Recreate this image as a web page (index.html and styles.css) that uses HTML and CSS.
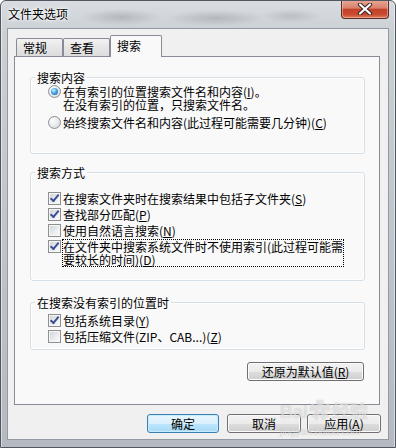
FILE: index.html
```html
<!DOCTYPE html>
<html lang="zh-CN">
<head>
    <meta charset="UTF-8">
    <title>文件夹选项</title>
    <link rel="stylesheet" href="styles.css">
</head>
<body>
    <div class="window">
        <div class="titlebar">
            <span class="title">文件夹选项</span>
            <button class="close" aria-label="关闭">
                <svg width="16" height="12" viewBox="0 0 16 12">
                    <path d="M3 1.5 L13 10.5 M13 1.5 L3 10.5" stroke="#3a2520" stroke-width="4.2" stroke-linecap="round"/>
                    <path d="M3 1.5 L13 10.5 M13 1.5 L3 10.5" stroke="#fff" stroke-width="2.2" stroke-linecap="round"/>
                </svg>
            </button>
        </div>

        <div class="client">
            <div class="tabs">
                <div class="tab">常规</div>
                <div class="tab">查看</div>
                <div class="tab active">搜索</div>
            </div>

            <div class="pane">
                <fieldset class="group g1">
                    <legend>搜索内容</legend>
                    <label class="opt">
                        <span class="radio on"></span>
                        <span class="txt">在有索引的位置搜索文件名和内容(<u>I</u>)。<br>在没有索引的位置，只搜索文件名。</span>
                    </label>
                    <label class="opt second">
                        <span class="radio"></span>
                        <span class="txt">始终搜索文件名和内容(此过程可能需要几分钟)(<u>C</u>)</span>
                    </label>
                </fieldset>

                <fieldset class="group g2">
                    <legend>搜索方式</legend>
                    <label class="opt">
                        <span class="cb on"></span>
                        <span class="txt">在搜索文件夹时在搜索结果中包括子文件夹(<u>S</u>)</span>
                    </label>
                    <label class="opt">
                        <span class="cb on"></span>
                        <span class="txt">查找部分匹配(<u>P</u>)</span>
                    </label>
                    <label class="opt">
                        <span class="cb"></span>
                        <span class="txt">使用自然语言搜索(<u>N</u>)</span>
                    </label>
                    <label class="opt">
                        <span class="cb on"></span>
                        <span class="txt focus">在文件夹中搜索系统文件时不使用索引(此过程可能需<br>要较长的时间)(<u>D</u>)</span>
                    </label>
                </fieldset>

                <fieldset class="group g3">
                    <legend>在搜索没有索引的位置时</legend>
                    <label class="opt">
                        <span class="cb on"></span>
                        <span class="txt">包括系统目录(<u>Y</u>)</span>
                    </label>
                    <label class="opt">
                        <span class="cb"></span>
                        <span class="txt">包括压缩文件(ZIP、CAB...)(<u>Z</u>)</span>
                    </label>
                </fieldset>

                <div class="reset-row">
                    <button class="btn reset">还原为默认值(<u>R</u>)</button>
                </div>
            </div>

            <div class="actions">
                <button class="btn default ok">确定</button>
                <button class="btn cancel">取消</button>
                <button class="btn apply">应用(<u>A</u>)</button>
            </div>
        </div>

        <div class="watermark">
            <div class="wm-logo">Bai<span class="paw">&#10047;</span>经验</div>
            <div class="wm-url">jingyan.baidu.com</div>
        </div>
    </div>
</body>
</html>
```

FILE: styles.css
```css
body {
    margin: 0;
    background: #fff;
    font-family: "Noto Sans CJK SC", "Noto Sans", sans-serif;
    font-size: 12px;
    color: #000;
}
.window {
    position: relative;
    width: 396px;
    height: 448px;
    box-sizing: border-box;
    border: 1px solid #50575e;
    border-radius: 6px 6px 0 0;
    padding: 0 6px 7px 6px;
    display: flex;
    flex-direction: column;
    background:
        radial-gradient(ellipse 40px 8px at 120px 16px, rgba(90, 96, 104, 0.25), transparent),
        radial-gradient(ellipse 50px 8px at 215px 17px, rgba(90, 96, 104, 0.25), transparent),
        radial-gradient(ellipse 30px 7px at 290px 15px, rgba(90, 96, 104, 0.2), transparent),
        linear-gradient(to bottom, #d9dde1 0, #cbd0d5 30px, #b4babf 100%);
    box-shadow: inset 1px 0 0 rgba(255, 255, 255, 0.5), inset -1px 0 0 rgba(255, 255, 255, 0.5);
    overflow: hidden;
}
.titlebar {
    height: 27px;
    display: flex;
    justify-content: space-between;
    align-items: flex-start;
}
.title {
    padding: 6px 0 0 1px;
    line-height: 13px;
    font-size: 12px;
    color: #000;
    text-shadow: 0 0 6px #fff, 0 0 3px #fff, 0 0 2px #fff;
}
.close {
    width: 48px;
    height: 19px;
    margin-top: -1px;
    padding: 0;
    border: 1px solid #5b2a22;
    border-top: none;
    border-radius: 0 0 4px 4px;
    background: linear-gradient(to bottom, #e9a99a 0, #d8806a 45%, #c2412a 52%, #c84a30 80%, #e07c5c 100%);
    box-shadow: inset 0 0 0 1px rgba(255, 220, 210, 0.45);
    display: flex;
    align-items: center;
    justify-content: center;
}
.client {
    flex: 1;
    border: 1px solid #9299a0;
    background: #f0f0f0;
    padding: 6px 8px 6px 6px;
    display: flex;
    flex-direction: column;
}

/* tabs */
.tabs {
    position: relative;
    z-index: 1;
    display: flex;
    align-items: flex-end;
    padding-left: 2px;
    margin-bottom: -1px;
}
.tab {
    box-sizing: border-box;
    width: 47px;
    height: 18px;
    margin-bottom: 1px;
    padding: 2px 0 0 6px;
    line-height: 13px;
    border: 1px solid #898c95;
    border-bottom: none;
    border-radius: 2px 2px 0 0;
    background: linear-gradient(to bottom, #f3f3f3, #e6e6e6 50%, #dcdcdc);
}
.tab.active {
    width: 52px;
    height: 22px;
    margin-bottom: 0;
    padding-top: 3px;
    background: #f9f9f9;
}
.pane {
    box-sizing: border-box;
    height: 349px;
    border: 1px solid #898c95;
    background: #f9f9f9;
    padding: 14px 14px 0 15px;
}

/* group boxes */
.group {
    margin: 0;
    border: 1px solid #d5dfe5;
    border-radius: 3px;
    box-shadow: inset 0 0 0 1px #fff;
    padding: 0 10px 0 17px;
    min-width: 0;
}
.group legend {
    margin-left: -13px;
    padding: 0 2px;
    line-height: 13px;
}
.g1 { padding-top: 1px; padding-bottom: 24px; }
.g2 { margin-top: 12px; padding-top: 13px; padding-bottom: 14px; }
.g3 { margin-top: 15px; padding-top: 5px; padding-bottom: 6px; }

.opt {
    display: flex;
    align-items: flex-start;
    gap: 2px;
    line-height: 13px;
    white-space: nowrap;
}
.opt + .opt { margin-top: 3px; }
.g1 .opt.second { margin-top: 5px; }
.txt u { text-decoration: underline; text-underline-offset: 1px; }
.txt.focus { outline: 1px dotted #000; outline-offset: 0; }

.cb, .radio {
    flex: none;
    box-sizing: border-box;
    width: 13px;
    height: 13px;
    border: 1px solid #8e8f8f;
    position: relative;
}
.cb {
    background: linear-gradient(135deg, #cdd1d6 0, #eceff1 60%, #fbfbfb 100%);
    box-shadow: inset 0 0 0 1px #f6f6f6;
}
.cb.on::after {
    content: "";
    position: absolute;
    left: 2px;
    top: 0;
    width: 3px;
    height: 7px;
    border: solid #3b4f94;
    border-width: 0 2px 2px 0;
    transform: rotate(40deg);
    transform-origin: 60% 50%;
    margin-left: 1px;
}
.radio {
    border-radius: 50%;
    background: radial-gradient(circle at 35% 35%, #fdfdfd, #dfe2e5 70%, #c9cdd1);
}
.radio.on::after {
    content: "";
    position: absolute;
    left: 2px;
    top: 2px;
    width: 7px;
    height: 7px;
    border-radius: 50%;
    background: radial-gradient(circle at 40% 35%, #d6f3ff 0, #46a4e6 45%, #1b5b96 100%);
}

/* buttons */
.btn {
    box-sizing: border-box;
    height: 19px;
    padding: 0;
    font-family: inherit;
    font-size: 12px;
    line-height: 13px;
    color: #000;
    border: 1px solid #707070;
    border-radius: 3px;
    background: linear-gradient(to bottom, #f2f2f2 0, #ebebeb 50%, #dddddd 51%, #cfcfcf 100%);
    box-shadow: inset 0 0 0 1px #fbfbfb;
}
.btn.default {
    border-color: #3c7fb1;
    background: linear-gradient(to bottom, #eaf6fd 0, #d9f0fc 50%, #bee6fd 51%, #a7d9f5 100%);
    box-shadow: inset 0 0 0 1px #c8ecff;
}
.reset-row {
    display: flex;
    justify-content: flex-end;
    margin-top: 12px;
}
.reset { width: 117px; margin-right: 1px; }
.actions {
    display: flex;
    justify-content: flex-end;
    margin: 9px -1px 0 0;
}
.ok { width: 72px; }
.cancel { width: 74px; margin-left: 8px; }
.apply { width: 74px; margin-left: 6px; }

/* watermark on top of the screenshot */
.watermark {
    position: absolute;
    left: 279px;
    top: 397px;
    color: rgba(255, 255, 255, 0.6);
    text-shadow: 0 0 1px rgba(0, 0, 0, 0.25);
    font-family: "Liberation Sans", "Noto Sans CJK SC", sans-serif;
    pointer-events: none;
}
.wm-logo {
    font-size: 18px;
    font-weight: bold;
    line-height: 26px;
}
.paw { font-size: 22px; margin: 0 1px; }
.wm-url {
    font-size: 10px;
    line-height: 12px;
    margin-top: 1px;
}
```
